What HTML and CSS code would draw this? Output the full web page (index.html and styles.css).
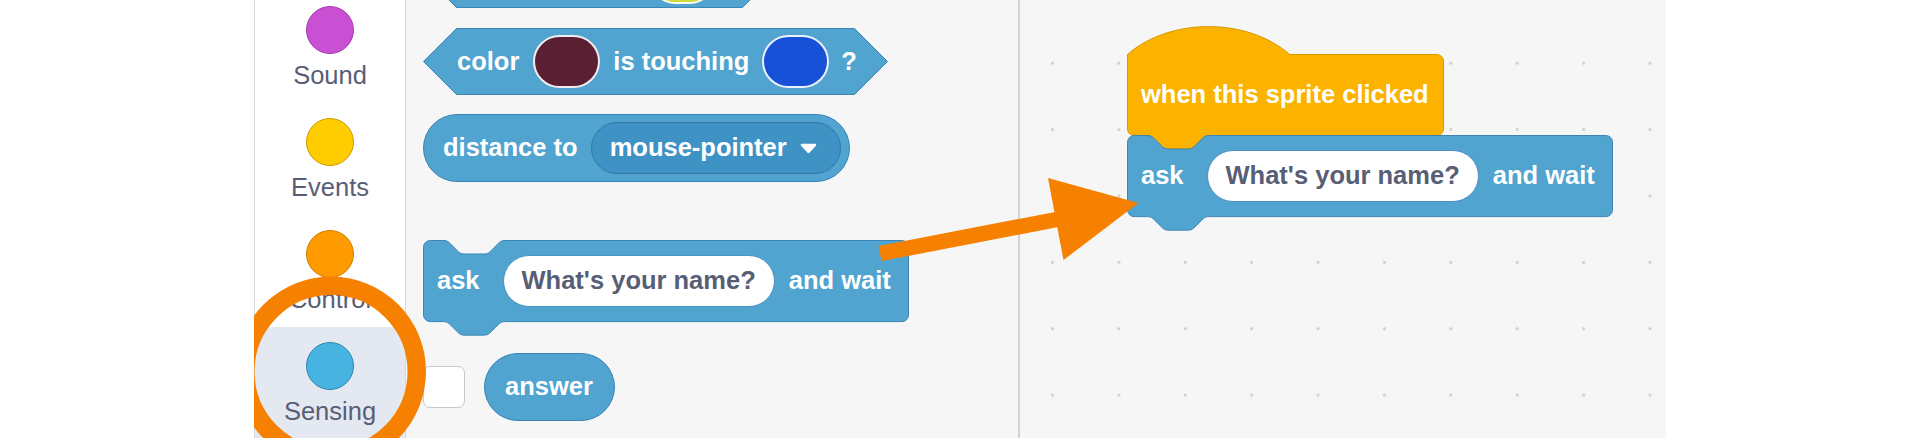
FILE: index.html
```html
<!DOCTYPE html>
<html lang="en">
<head>
<meta charset="utf-8">
<title>Scratch sensing – ask and wait</title>
<link rel="stylesheet" href="styles.css">
</head>
<body>
<div class="frame">
  <nav class="categories">
    <div class="cat"><span class="dot dot-sound"></span><span class="cat-label">Sound</span></div>
    <div class="cat"><span class="dot dot-events"></span><span class="cat-label">Events</span></div>
    <div class="cat"><span class="dot dot-control"></span><span class="cat-label">Control</span></div>
    <div class="cat cat-selected"><span class="dot dot-sensing"></span><span class="cat-label">Sensing</span></div>
  </nav>

  <div class="flyout">
    <div class="block bool b-touch">
      <svg class="shape" width="353" height="67" viewBox="0 0 353 67"><path class="sense-fill" d="M33.5,0.5 H319.5 L352.5,33.5 L319.5,66.5 H33.5 L0.5,33.5 Z"/></svg>
      <span class="swatch swatch-lime"></span>
    </div>

    <div class="block bool b-color">
      <svg class="shape" width="465" height="67" viewBox="0 0 465 67"><path class="sense-fill" d="M33.5,0.5 H431.5 L464.5,33.5 L431.5,66.5 H33.5 L0.5,33.5 Z"/></svg>
      <span class="label">color</span>
      <span class="swatch swatch-maroon"></span>
      <span class="label touching">is touching</span>
      <span class="swatch swatch-blue"></span>
      <span class="label q">?</span>
    </div>

    <div class="reporter b-distance">
      <span class="label">distance to</span>
      <span class="dropdown">
        <span class="label">mouse-pointer</span>
        <svg class="caret" width="17" height="11" viewBox="0 0 17 11"><path d="M2,2 H15 L8.5,9 Z"/></svg>
      </span>
    </div>

    <div class="block stack b-ask">
      <svg class="shape" width="486" height="96" viewBox="0 0 486 96"><path class="sense-fill" vector-effect="non-scaling-stroke" transform="translate(0.5 0.5) scale(1.69)" d="M0,4 A4,4 0 0 1 4,0 H12 c2,0 3,1 4,2 l4,4 c1,1 2,2 4,2 h12 c2,0 3,-1 4,-2 l4,-4 c1,-1 2,-2 4,-2 H283 A4,4 0 0 1 287,4 V44 A4,4 0 0 1 283,48 H48 c-2,0 -3,1 -4,2 l-4,4 c-1,1 -2,2 -4,2 h-12 c-2,0 -3,-1 -4,-2 l-4,-4 c-1,-1 -2,-2 -4,-2 H4 A4,4 0 0 1 0,44 Z"/></svg>
      <span class="label">ask</span>
      <span class="text-input">What's your name?</span>
      <span class="label and-wait">and wait</span>
    </div>

    <div class="answer-row">
      <span class="checkbox"></span>
      <div class="reporter b-answer"><span class="label">answer</span></div>
    </div>
  </div>

  <div class="workspace">
    <div class="script">
      <div class="block hat">
        <svg class="shape" width="317" height="96" viewBox="0 0 317 96"><path class="event-fill" vector-effect="non-scaling-stroke" transform="translate(0.5 0.5) scale(1.69)" d="M0,0 c25,-22 71,-22 96,0 H183 A4,4 0 0 1 187,4 V44 A4,4 0 0 1 183,48 H48 c-2,0 -3,1 -4,2 l-4,4 c-1,1 -2,2 -4,2 h-12 c-2,0 -3,-1 -4,-2 l-4,-4 c-1,-1 -2,-2 -4,-2 H4 A4,4 0 0 1 0,44 Z"/></svg>
        <span class="label">when this sprite clicked</span>
      </div>
      <div class="block stack">
        <svg class="shape" width="486" height="96" viewBox="0 0 486 96"><path class="sense-fill" vector-effect="non-scaling-stroke" transform="translate(0.5 0.5) scale(1.69)" d="M0,4 A4,4 0 0 1 4,0 H12 c2,0 3,1 4,2 l4,4 c1,1 2,2 4,2 h12 c2,0 3,-1 4,-2 l4,-4 c1,-1 2,-2 4,-2 H283 A4,4 0 0 1 287,4 V44 A4,4 0 0 1 283,48 H48 c-2,0 -3,1 -4,2 l-4,4 c-1,1 -2,2 -4,2 h-12 c-2,0 -3,-1 -4,-2 l-4,-4 c-1,-1 -2,-2 -4,-2 H4 A4,4 0 0 1 0,44 Z"/></svg>
        <span class="label">ask</span>
        <span class="text-input">What's your name?</span>
        <span class="label and-wait">and wait</span>
      </div>
    </div>
  </div>

  <svg class="annotations" width="1412" height="438" viewBox="0 0 1412 438">
    <circle cx="77" cy="371.5" r="85.75" fill="none" stroke="#f68000" stroke-width="18.5"/>
    <line x1="626" y1="253.5" x2="808" y2="218.5" stroke="#f68000" stroke-width="15.5"/>
    <polygon points="794,178 884.5,203 809.5,260" fill="#f68000"/>
  </svg>
</div>
</body>
</html>
```

FILE: styles.css
```css
* { box-sizing: border-box; }

html, body {
  margin: 0;
  padding: 0;
  background: #ffffff;
}

body {
  font-family: "Liberation Sans", Arial, Helvetica, sans-serif;
}

.frame {
  position: relative;
  width: 1412px;
  height: 438px;
  margin: 0 auto;
  display: flex;
  overflow: hidden;
  background-color: #f6f6f6;
  background-image: radial-gradient(circle at 33.2px 33.2px, #d0d0d0 0, #d0d0d0 1.2px, rgba(208, 208, 208, 0) 1.9px);
  background-size: 66.4px 66.4px;
  background-position: 35px 30px;
}

/* ---------- category sidebar ---------- */
.categories {
  flex: 0 0 152px;
  display: flex;
  flex-direction: column;
  background: #ffffff;
  border-left: 1px solid #d8d8d8;
  border-right: 1px solid #d8d8d8;
}

.cat {
  flex: 0 0 112px;
  display: flex;
  flex-direction: column;
  align-items: center;
}

.cat:first-child {
  margin-top: -9px;
}

.cat-selected {
  background: #e4e9f1;
}

.dot {
  display: block;
  width: 48px;
  height: 48px;
  margin-top: 15px;
  border-radius: 50%;
  border: 1.5px solid;
}

.dot-sound   { background: #c94fd3; border-color: #a93db2; }
.dot-events  { background: #ffcc00; border-color: #cc9a00; }
.dot-control { background: #ff9a00; border-color: #cf8000; }
.dot-sensing { background: #47b3e0; border-color: #2d86b1; }

.cat-label {
  margin-top: 6px;
  font-size: 25.5px;
  line-height: 30px;
  color: #575e75;
  white-space: nowrap;
}

/* ---------- flyout ---------- */
.flyout {
  flex: 0 0 614px;
  display: flex;
  flex-direction: column;
  align-items: flex-start;
  padding-left: 17px;
  background: rgba(246, 246, 246, 0.9);
  border-right: 2px solid #d3d3d3;
}

/* ---------- workspace ---------- */
.workspace {
  flex: 1 1 auto;
  padding-left: 107px;
  padding-top: 54px;
}

.script {
  display: flex;
  flex-direction: column;
  align-items: flex-start;
}

/* ---------- blocks ---------- */
.block {
  position: relative;
  display: flex;
  align-items: center;
  flex: 0 0 auto;
}

.block > *:not(.shape) {
  position: relative;
}

.shape {
  position: absolute;
  left: 0;
  top: 0;
  overflow: visible;
}

.sense-fill {
  fill: #51a3d0;
  stroke: #3a85b5;
  stroke-width: 1;
}

.event-fill {
  fill: #fbb300;
  stroke: #d49a00;
  stroke-width: 1;
}

.label {
  color: #ffffff;
  font-weight: bold;
  font-size: 25.5px;
  line-height: 1;
  white-space: nowrap;
}

.bool {
  height: 67px;
  padding-left: 34px;
}

.b-touch {
  width: 353px;
  margin-top: -59px;
  padding-left: 226px;
}

.b-color {
  width: 465px;
  margin-top: 20px;
}

.swatch {
  display: block;
  width: 67px;
  height: 53px;
  border-radius: 26.5px;
  border: 2px solid rgba(255, 255, 255, 0.92);
  margin-left: 14px;
}

.swatch-lime   { background: #cddc3a; margin-left: 0; margin-top: 5px; }
.swatch-maroon { background: #5a1f33; }
.swatch-blue   { background: #1751d8; margin-left: 13px; }

.touching { margin-left: 13px; }
.q { margin-left: 12px; }

/* reporters */
.reporter {
  display: flex;
  align-items: center;
  flex: 0 0 auto;
  height: 68px;
  border-radius: 34px;
  background: #51a3d0;
  border: 1px solid #3a85b5;
}

.b-distance {
  width: 427px;
  margin-top: 19px;
  padding-left: 19px;
}

.dropdown {
  display: flex;
  align-items: center;
  width: 250px;
  height: 52px;
  margin-left: 13px;
  padding-left: 18px;
  border-radius: 26px;
  background: #3f93c4;
  border: 1px solid #3378a8;
}

.caret {
  display: block;
  margin-left: 13px;
}

.caret path {
  fill: #ffffff;
  stroke: #ffffff;
  stroke-width: 2.5;
  stroke-linejoin: round;
}

/* stack blocks */
.stack {
  width: 485px;
  height: 81px;
  padding-left: 14px;
}

.b-ask {
  margin-top: 58px;
}

.hat {
  width: 316px;
  height: 81px;
  padding-left: 14px;
}

.text-input {
  display: flex;
  align-items: center;
  height: 52px;
  margin-left: 23px;
  padding: 0 18px;
  border-radius: 26px;
  background: #ffffff;
  border: 1px solid #4a92c0;
  color: #575e75;
  font-weight: bold;
  font-size: 25.5px;
  line-height: 1;
  white-space: nowrap;
}

.and-wait {
  margin-left: 14px;
}

/* answer row */
.answer-row {
  display: flex;
  align-items: center;
  margin-top: 32px;
  gap: 19px;
}

.checkbox {
  display: block;
  width: 42px;
  height: 42px;
  border-radius: 7px;
  background: #ffffff;
  border: 1.5px solid #c8c8c8;
}

.b-answer {
  padding: 0 21px 0 20px;
}

/* annotations drawn over the screenshot */
.annotations {
  position: absolute;
  left: 0;
  top: 0;
  pointer-events: none;
}
```
